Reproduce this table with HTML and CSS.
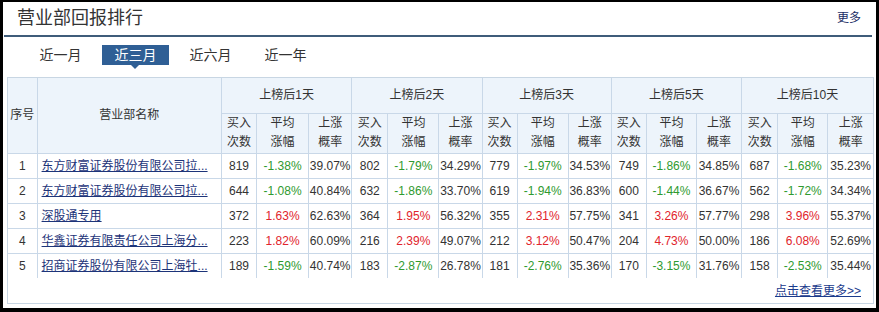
FILE: index.html
```html
<!DOCTYPE html>
<html lang="zh-CN">
<head>
<meta charset="utf-8">
<title>营业部回报排行</title>
<link rel="stylesheet" href="styles.css">
</head>
<body>
<div class="panel">
  <div class="head">
    <h2 class="title">营业部回报排行</h2>
    <a class="more" href="#">更多</a>
  </div>
  <div class="tabs">
    <span class="tab">近一月</span>
    <span class="tab active">近三月</span>
    <span class="tab">近六月</span>
    <span class="tab">近一年</span>
  </div>
  <div class="box">
    <table class="grid">
      <colgroup>
        <col class="c-no"><col class="c-name">
        <col class="c-n"><col class="c-a"><col class="c-p">
        <col class="c-n2"><col class="c-a2"><col class="c-p">
        <col class="c-n"><col class="c-a2"><col class="c-p">
        <col class="c-n"><col class="c-a3"><col class="c-p2">
        <col class="c-n2"><col class="c-a3"><col class="c-p2">
      </colgroup>
      <thead>
        <tr class="h1">
          <th rowspan="2">序号</th>
          <th rowspan="2">营业部名称</th>
          <th colspan="3">上榜后1天</th>
          <th colspan="3">上榜后2天</th>
          <th colspan="3">上榜后3天</th>
          <th colspan="3">上榜后5天</th>
          <th colspan="3">上榜后10天</th>
        </tr>
        <tr class="h2">
          <th>买入<br>次数</th><th>平均<br>涨幅</th><th>上涨<br>概率</th>
          <th>买入<br>次数</th><th>平均<br>涨幅</th><th>上涨<br>概率</th>
          <th>买入<br>次数</th><th>平均<br>涨幅</th><th>上涨<br>概率</th>
          <th>买入<br>次数</th><th>平均<br>涨幅</th><th>上涨<br>概率</th>
          <th>买入<br>次数</th><th>平均<br>涨幅</th><th>上涨<br>概率</th>
        </tr>
      </thead>
      <tbody>
        <tr>
          <td>1</td><td class="name"><a href="#">东方财富证券股份有限公司拉...</a></td>
          <td>819</td><td class="dn">-1.38%</td><td>39.07%</td>
          <td>802</td><td class="dn">-1.79%</td><td>34.29%</td>
          <td>779</td><td class="dn">-1.97%</td><td>34.53%</td>
          <td>749</td><td class="dn">-1.86%</td><td>34.85%</td>
          <td>687</td><td class="dn">-1.68%</td><td>35.23%</td>
        </tr>
        <tr>
          <td>2</td><td class="name"><a href="#">东方财富证券股份有限公司拉...</a></td>
          <td>644</td><td class="dn">-1.08%</td><td>40.84%</td>
          <td>632</td><td class="dn">-1.86%</td><td>33.70%</td>
          <td>619</td><td class="dn">-1.94%</td><td>36.83%</td>
          <td>600</td><td class="dn">-1.44%</td><td>36.67%</td>
          <td>562</td><td class="dn">-1.72%</td><td>34.34%</td>
        </tr>
        <tr>
          <td>3</td><td class="name"><a href="#">深股通专用</a></td>
          <td>372</td><td class="up">1.63%</td><td>62.63%</td>
          <td>364</td><td class="up">1.95%</td><td>56.32%</td>
          <td>355</td><td class="up">2.31%</td><td>57.75%</td>
          <td>341</td><td class="up">3.26%</td><td>57.77%</td>
          <td>298</td><td class="up">3.96%</td><td>55.37%</td>
        </tr>
        <tr>
          <td>4</td><td class="name"><a href="#">华鑫证券有限责任公司上海分...</a></td>
          <td>223</td><td class="up">1.82%</td><td>60.09%</td>
          <td>216</td><td class="up">2.39%</td><td>49.07%</td>
          <td>212</td><td class="up">3.12%</td><td>50.47%</td>
          <td>204</td><td class="up">4.73%</td><td>50.00%</td>
          <td>186</td><td class="up">6.08%</td><td>52.69%</td>
        </tr>
        <tr>
          <td>5</td><td class="name"><a href="#">招商证券股份有限公司上海牡...</a></td>
          <td>189</td><td class="dn">-1.59%</td><td>40.74%</td>
          <td>183</td><td class="dn">-2.87%</td><td>26.78%</td>
          <td>181</td><td class="dn">-2.76%</td><td>35.36%</td>
          <td>170</td><td class="dn">-3.15%</td><td>31.76%</td>
          <td>158</td><td class="dn">-2.53%</td><td>35.44%</td>
        </tr>
      </tbody>
    </table>
    <div class="foot"><a href="#">点击查看更多&gt;&gt;</a></div>
  </div>
</div>
</body>
</html>
```
FILE: styles.css
```css
* { box-sizing: border-box; }
html, body { margin: 0; padding: 0; }
body {
  background: #000;
  padding: 2px 3px 4px 3px;
  font-family: "Liberation Sans", "Noto Sans CJK SC", sans-serif;
  color: #333;
  width: 879px;
  height: 312px;
}
.panel {
  background: #fff;
  width: 873px;
  height: 306px;
  overflow: hidden;
}
.head {
  display: flex;
  justify-content: space-between;
  align-items: flex-start;
  margin: 0 4px 0 1px;
  padding: 0 11px 0 13px;
  height: 35px;
  border-bottom: 2px solid #3f5c7a;
}
.title {
  margin: 0;
  font-size: 18px;
  font-weight: normal;
  line-height: 32px;
  color: #333;
}
.more {
  margin-top: 8px;
  font-size: 12px;
  line-height: 16px;
  color: #1b2d66;
  text-decoration: none;
}
.tabs {
  display: flex;
  gap: 8px;
  padding: 8px 0 0 24px;
  height: 40px;
}
.tab {
  position: relative;
  width: 67px;
  height: 20px;
  line-height: 20px;
  font-size: 14px;
  text-align: center;
  color: #333;
}
.tab.active {
  background: #2f5f95;
  color: #fff;
}
.tab.active::after {
  content: "";
  position: absolute;
  left: 29px;
  top: 20px;
  border-left: 4px solid transparent;
  border-right: 4px solid transparent;
  border-top: 4px solid #2f5f95;
}
.box {
  margin-left: 4px;
  width: 867px;
  height: 227px;
  border: 1px solid #c8d6e3;
}
.grid {
  width: 865px;
  table-layout: fixed;
  border-collapse: collapse;
  border-style: hidden;
  font-size: 12px;
}
.c-no { width: 29px; }
.c-name { width: 184px; }
.c-n { width: 35px; }
.c-n2 { width: 36px; }
.c-a { width: 52px; }
.c-a2 { width: 51px; }
.c-a3 { width: 50px; }
.c-p { width: 43px; }
.c-p2 { width: 45px; }
.grid th, .grid td {
  border: 1px solid #c9d8e8;
  padding: 0;
  text-align: center;
  white-space: nowrap;
  overflow: hidden;
}
.grid th {
  background: #edf4fb;
  font-weight: normal;
  color: #333;
  line-height: 16px;
}
.h1 th { height: 35px; }
.h2 th { height: 40px; line-height: 19px; }
.grid td { height: 25px; line-height: 16px; color: #333; }
.grid td.name { text-align: left; padding-left: 4px; }
.name a { color: #1d3479; text-decoration: underline; }
.grid td.dn { color: #2f9a2f; }
.grid td.up { color: #e1242c; }
.foot {
  height: 25px;
  padding: 5px 12px 0 0;
  text-align: right;
  font-size: 12px;
  line-height: 16px;
}
.foot a { color: #1a3a8c; text-decoration: underline; }
```
